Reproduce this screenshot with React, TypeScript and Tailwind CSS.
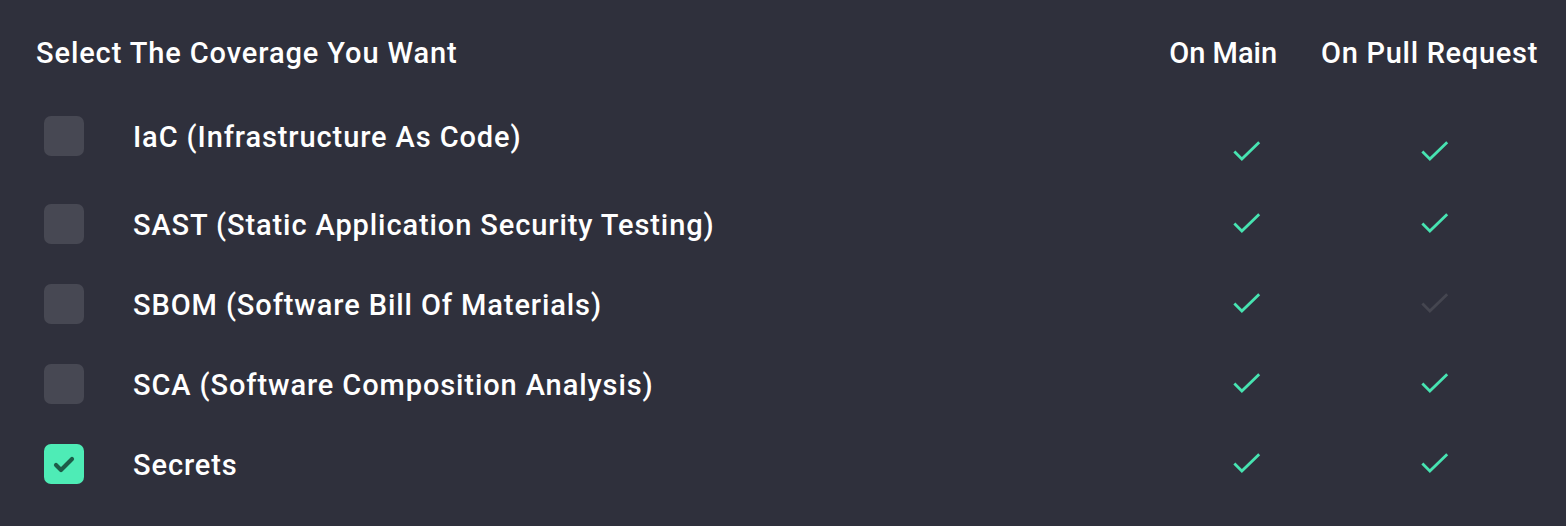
import React from 'react';

type Row = { label: string; main: boolean; pr: boolean; checked?: boolean; first?: boolean };

const rows: Row[] = [
  { label: 'IaC (Infrastructure As Code)', main: true, pr: true, first: true },
  { label: 'SAST (Static Application Security Testing)', main: true, pr: true },
  { label: 'SBOM (Software Bill Of Materials)', main: true, pr: false },
  { label: 'SCA (Software Composition Analysis)', main: true, pr: true },
  { label: 'Secrets', main: true, pr: true, checked: true },
];

const Tick = ({ on }: { on: boolean }) => (
  <svg width="30" height="24" viewBox="0 0 30 24" fill="none" className={on ? 'text-[#47e3b1]' : 'text-[#454650]'}>
    <polyline points="2.5,12.5 9.5,19.5 27,2.5" stroke="currentColor" strokeWidth="3" strokeLinecap="square" />
  </svg>
);

export default function App() {
  return (
    <div className="w-[1566px] h-[526px] bg-[#2f303c] text-white font-['Roboto',sans-serif] font-medium overflow-hidden">
      <div className="flex items-center pt-[34px] pl-[36px] h-[72px]">
        <h2 className="flex-1 text-[29px] leading-[36px] tracking-[0.9px]">Select The Coverage You Want</h2>
        <span className="text-[29px] leading-[36px]">On Main</span>
        <span className="text-[29px] leading-[36px] tracking-[0.7px] ml-[44px] mr-[28px]">On Pull Request</span>
      </div>

      <div className="flex flex-col gap-[40px] pt-[44px] pl-[44px]">
        {rows.map((r) => (
          <div key={r.label} className="flex items-start">
            <div
              className={
                'w-[40px] h-[40px] rounded-[7px] shrink-0 ' +
                (r.checked ? 'bg-[#4eecb6]' : 'bg-[#474853]')
              }
            >
              {r.checked && (
                <svg width="40" height="40" viewBox="0 0 40 40" fill="none">
                  <polyline points="12,21 17,26 28,15" stroke="#1d5c48" strokeWidth="4.2" strokeLinecap="round" strokeLinejoin="round" />
                </svg>
              )}
            </div>
            <span className="flex-1 ml-[49px] pt-[3px] text-[29px] leading-[37px] tracking-[0.9px]">{r.label}</span>
            <div className={'flex ' + (r.first ? 'mt-[24px]' : 'mt-[8px]')}>
              <div className="w-[28px] flex justify-center"><Tick on={r.main} /></div>
              <div className="w-[28px] ml-[160px] mr-[117px] flex justify-center"><Tick on={r.pr} /></div>
            </div>
          </div>
        ))}
      </div>
    </div>
  );
}
